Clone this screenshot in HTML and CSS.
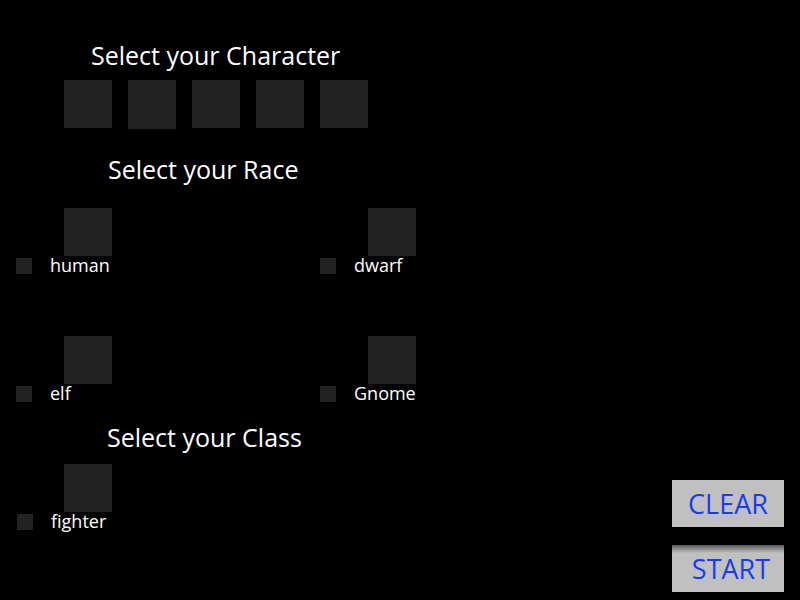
FILE: index.html
```html
<!DOCTYPE html>
<html>
<head>
<meta charset="utf-8">
<link rel="stylesheet" href="styles.css">
</head>
<body>
<div class="page">
  <div class="left">
    <h2 class="title title-char">Select your Character</h2>
    <div class="chars">
      <div class="tile"></div>
      <div class="tile tall"></div>
      <div class="tile"></div>
      <div class="tile"></div>
      <div class="tile"></div>
    </div>
    <h2 class="title title-race">Select your Race</h2>
    <div class="races">
      <div class="opt">
        <div class="tile pic"></div>
        <label class="row"><span class="box"></span><span class="name">human</span></label>
      </div>
      <div class="opt">
        <div class="tile pic"></div>
        <label class="row"><span class="box"></span><span class="name">dwarf</span></label>
      </div>
      <div class="opt">
        <div class="tile pic"></div>
        <label class="row"><span class="box"></span><span class="name">elf</span></label>
      </div>
      <div class="opt">
        <div class="tile pic"></div>
        <label class="row"><span class="box"></span><span class="name">Gnome</span></label>
      </div>
    </div>
    <h2 class="title title-class">Select your Class</h2>
    <div class="classes">
      <div class="opt shift">
        <div class="tile pic"></div>
        <label class="row"><span class="box"></span><span class="name">fighter</span></label>
      </div>
    </div>
  </div>
  <div class="right">
    <button class="btn">CLEAR</button>
    <button class="btn start">START</button>
  </div>
</div>
</body>
</html>
```
FILE: styles.css
```css
html, body {
  margin: 0;
  padding: 0;
  background: #000;
}
body {
  width: 800px;
  height: 600px;
  overflow: hidden;
  font-family: "Open Sans", "Liberation Sans", sans-serif;
  color: #fff;
}
.page {
  display: flex;
  justify-content: space-between;
  height: 600px;
}
.left {
  display: flex;
  flex-direction: column;
  padding: 38px 0 0 16px;
}
.title {
  margin: 0;
  font-weight: 400;
  font-size: 25px;
  line-height: 34px;
}
.title-char { margin-left: 75px; }
.title-race { margin: 23px 0 0 92px; }
.title-class { margin: 18px 0 0 91px; }
.chars {
  display: flex;
  gap: 16px;
  margin: 8px 0 0 48px;
  align-items: flex-start;
}
.tile {
  width: 48px;
  height: 48px;
  background: #222;
}
.tile.tall { height: 49px; }
.races {
  display: grid;
  grid-template-columns: 304px 304px;
  row-gap: 62px;
  margin-top: 22px;
}
.classes { margin-top: 10px; }
.opt {
  display: flex;
  flex-direction: column;
}
.opt.shift .box { margin-left: 1px; }
.pic { margin-left: 48px; }
.row {
  display: flex;
  align-items: center;
  margin-top: 2px;
  height: 16px;
}
.box {
  width: 16px;
  height: 16px;
  background: #222;
  flex: none;
}
.name {
  margin-left: 18px;
  font-size: 18px;
  line-height: 16px;
  position: relative;
  top: -1px;
}
.right {
  display: flex;
  flex-direction: column;
  justify-content: flex-end;
  gap: 18px;
  padding: 0 16px 8px 0;
}
.btn {
  width: 112px;
  height: 47px;
  border: none;
  background: #c0c0c0;
  color: #1a3cf0;
  font-family: "Open Sans", "Liberation Sans", sans-serif;
  font-size: 27px;
  padding: 0;
  line-height: 47px;
}
.btn.start {
  padding-left: 6px;
  background: linear-gradient(#5a5a5a, #c0c0c0 8px);
}
```
